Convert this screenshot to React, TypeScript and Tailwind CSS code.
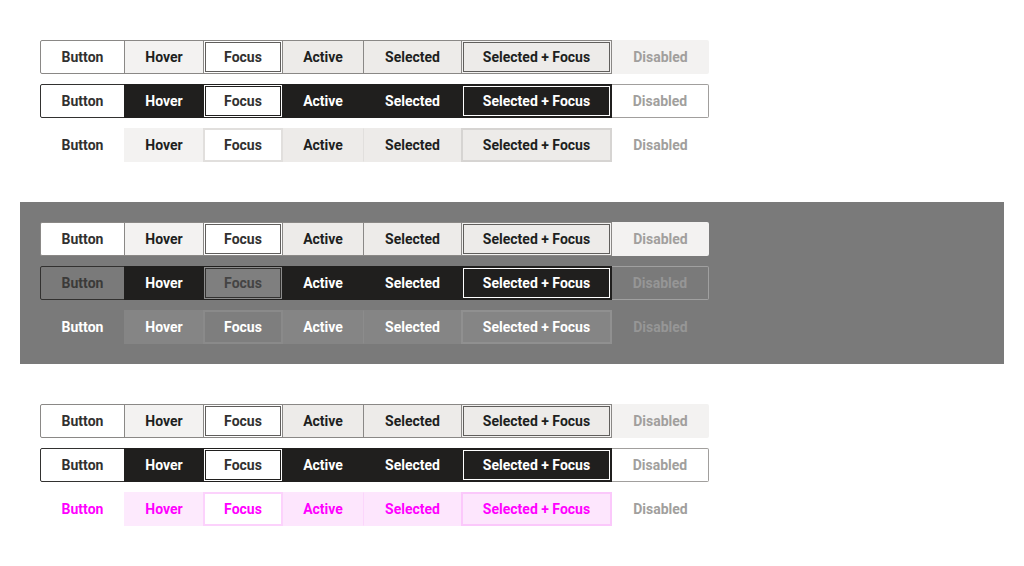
import React from "react";

type Item = { label: string; cls: string };

const W = [
  "w-[85px]",
  "w-[80px] -ml-px",
  "w-[80px] -ml-px",
  "w-[82px] -ml-px",
  "w-[99px] -ml-px",
  "w-[151px] -ml-px",
  "w-[97px]",
];

const base =
  "h-[34px] flex items-center justify-center text-[14px] font-bold leading-none box-border";

const lightRow: Item[] = [
  { label: "Button", cls: "bg-white border border-[#8a8886] rounded-l-[2px] text-[#323130]" },
  { label: "Hover", cls: "bg-[#f3f2f1] border border-[#8a8886] text-[#201f1e]" },
  {
    label: "Focus",
    cls: "relative z-10 bg-white border border-[#8a8886] text-[#323130] shadow-[inset_0_0_0_1px_#ffffff,inset_0_0_0_2px_#605e5c]",
  },
  { label: "Active", cls: "bg-[#edebe9] border border-[#8a8886] text-[#201f1e]" },
  { label: "Selected", cls: "bg-[#edebe9] border border-[#8a8886] text-[#201f1e]" },
  {
    label: "Selected + Focus",
    cls: "relative z-10 bg-[#edebe9] border border-[#8a8886] text-[#201f1e] shadow-[inset_0_0_0_1px_#f3f2f1,inset_0_0_0_2px_#605e5c]",
  },
  { label: "Disabled", cls: "bg-[#f3f2f1] rounded-r-[2px] text-[#a19f9d]" },
];

const darkRow: Item[] = [
  { label: "Button", cls: "bg-white border border-[#323130] rounded-l-[2px] text-[#323130]" },
  { label: "Hover", cls: "bg-[#201f1e] border border-[#201f1e] text-white" },
  {
    label: "Focus",
    cls: "relative z-10 bg-white border border-[#201f1e] text-[#323130] shadow-[inset_0_0_0_1px_#ffffff,inset_0_0_0_2px_#201f1e]",
  },
  { label: "Active", cls: "bg-[#201f1e] border border-[#201f1e] text-white" },
  { label: "Selected", cls: "bg-[#201f1e] border border-[#201f1e] text-white" },
  {
    label: "Selected + Focus",
    cls: "relative z-10 bg-[#201f1e] border border-[#201f1e] text-white shadow-[inset_0_0_0_1px_#201f1e,inset_0_0_0_2px_#ffffff]",
  },
  {
    label: "Disabled",
    cls: "bg-white border border-l-0 border-[#a19f9d] rounded-r-[2px] text-[#a19f9d]",
  },
];

const subtleRow: Item[] = [
  { label: "Button", cls: "border border-transparent text-[#323130]" },
  { label: "Hover", cls: "bg-[#f3f2f1] border border-[#f3f2f1] text-[#201f1e]" },
  {
    label: "Focus",
    cls: "relative z-10 bg-white border-2 border-[#e1dfdd] text-[#323130]",
  },
  { label: "Active", cls: "bg-[#edebe9] border border-[#edebe9] text-[#201f1e]" },
  { label: "Selected", cls: "bg-[#edebe9] border border-[#edebe9] border-l-[#e1dfdd] text-[#201f1e]" },
  {
    label: "Selected + Focus",
    cls: "relative z-10 bg-[#edebe9] border-2 border-[#d6d4d2] text-[#201f1e]",
  },
  { label: "Disabled", cls: "text-[#a19f9d]" },
];

const grayLightRow: Item[] = [
  ...lightRow.slice(0, 6),
  { label: "Disabled", cls: "bg-[#f3f2f1] rounded-r-[2px] text-[#a19f9d]" },
];

const grayDarkRow: Item[] = [
  { label: "Button", cls: "border border-[#323130] rounded-l-[2px] text-[#3b3a39]" },
  { label: "Hover", cls: "bg-[#201f1e] border border-[#201f1e] text-white" },
  {
    label: "Focus",
    cls: "relative z-10 bg-[#7f7f7f] border border-[#201f1e] text-[#444444] shadow-[inset_0_0_0_1px_#8c8c8c,inset_0_0_0_2px_#323130]",
  },
  { label: "Active", cls: "bg-[#201f1e] border border-[#201f1e] text-white" },
  { label: "Selected", cls: "bg-[#201f1e] border border-[#201f1e] text-white" },
  {
    label: "Selected + Focus",
    cls: "relative z-10 bg-[#201f1e] border border-[#201f1e] text-white shadow-[inset_0_0_0_1px_#201f1e,inset_0_0_0_2px_#ffffff]",
  },
  {
    label: "Disabled",
    cls: "border border-l-0 border-[#a0a0a0] rounded-r-[2px] text-[#969696]",
  },
];

const graySubtleRow: Item[] = [
  { label: "Button", cls: "border border-transparent text-white" },
  { label: "Hover", cls: "bg-[#858585] border border-[#858585] text-white" },
  {
    label: "Focus",
    cls: "relative z-10 bg-[#7e7e7e] border-2 border-[#8a8a8a] text-white",
  },
  { label: "Active", cls: "bg-[#858585] border border-[#858585] text-white" },
  { label: "Selected", cls: "bg-[#858585] border border-[#858585] border-l-[#8c8c8c] text-white" },
  {
    label: "Selected + Focus",
    cls: "relative z-10 bg-[#858585] border-2 border-[#909090] text-white",
  },
  { label: "Disabled", cls: "text-[#969696]" },
];

const pinkRow: Item[] = [
  { label: "Button", cls: "border border-transparent text-[#ff00ff]" },
  { label: "Hover", cls: "bg-[#fdeafd] border border-[#fdeafd] text-[#ff00ff]" },
  {
    label: "Focus",
    cls: "relative z-10 bg-white border-2 border-[#fcd2fc] text-[#ff00ff]",
  },
  { label: "Active", cls: "bg-[#fde6fd] border border-[#fde6fd] text-[#ff00ff]" },
  { label: "Selected", cls: "bg-[#fde6fd] border border-[#fde6fd] border-l-[#fbd6fb] text-[#ff00ff]" },
  {
    label: "Selected + Focus",
    cls: "relative z-10 bg-[#fde6fd] border-2 border-[#fbc8fb] text-[#ff00ff]",
  },
  { label: "Disabled", cls: "text-[#a19f9d]" },
];

function Row({ items }: { items: Item[] }) {
  return (
    <div className="flex">
      {items.map((it, i) => (
        <div key={i} className={`${base} ${W[i]} ${it.cls}`}>
          {it.label}
        </div>
      ))}
    </div>
  );
}

export default function App() {
  return (
    <div className="w-[1024px] h-[566px] bg-white p-5 flex flex-col gap-5 font-['Roboto',sans-serif]">
      <div className="p-5 flex flex-col gap-2.5">
        <Row items={lightRow} />
        <Row items={darkRow} />
        <Row items={subtleRow} />
      </div>
      <div className="p-5 flex flex-col gap-2.5 bg-[#7a7a7a]">
        <Row items={grayLightRow} />
        <Row items={grayDarkRow} />
        <Row items={graySubtleRow} />
      </div>
      <div className="p-5 flex flex-col gap-2.5">
        <Row items={lightRow} />
        <Row items={darkRow} />
        <Row items={pinkRow} />
      </div>
    </div>
  );
}
